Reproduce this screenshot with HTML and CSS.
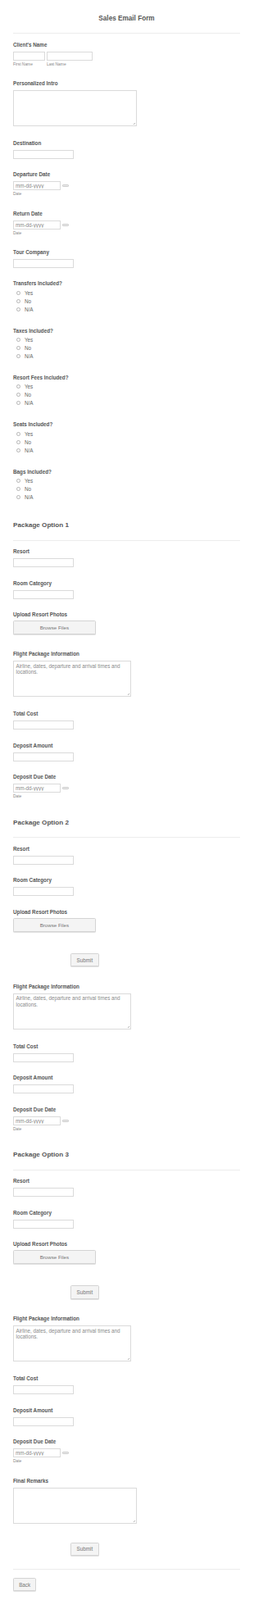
FILE: index.html
```html
<!DOCTYPE html>
<html lang="en">
<head>
    <meta charset="UTF-8">
    <meta name="viewport" content="width=device-width, initial-scale=1.0">
    <title>Sales Email Form</title>
    <link rel="stylesheet" href="styles.css">
</head>
<body>

<form class="sales-form">

    <div class="form-header">
        <h1 class="form-title">Sales Email Form</h1>
    </div>

    <div class="field field-sub">
        <label class="field-label">Client's Name</label>
        <div class="name-row">
            <div class="name-col first">
                <input class="text-input" type="text">
                <div class="sublabel">First Name</div>
            </div>
            <div class="name-col last">
                <input class="text-input" type="text">
                <div class="sublabel">Last Name</div>
            </div>
        </div>
    </div>

    <div class="field field-area">
        <label class="field-label">Personalized Intro</label>
        <textarea class="text-area wide"></textarea>
    </div>

    <div class="field">
        <label class="field-label">Destination</label>
        <input class="text-input" type="text">
    </div>

    <div class="field field-sub">
        <label class="field-label">Departure Date</label>
        <div class="date-row">
            <input class="date-input" type="text" placeholder="mm-dd-yyyy">
            <svg class="cal-icon" viewBox="0 0 8 3"><rect x="0.4" y="0.4" width="7.2" height="2.2" rx="1.1" fill="#ececec" stroke="#a9a9a9" stroke-width="0.6"/></svg>
        </div>
        <div class="sublabel">Date</div>
    </div>

    <div class="field field-sub">
        <label class="field-label">Return Date</label>
        <div class="date-row">
            <input class="date-input" type="text" placeholder="mm-dd-yyyy">
            <svg class="cal-icon" viewBox="0 0 8 3"><rect x="0.4" y="0.4" width="7.2" height="2.2" rx="1.1" fill="#ececec" stroke="#a9a9a9" stroke-width="0.6"/></svg>
        </div>
        <div class="sublabel">Date</div>
    </div>

    <div class="field">
        <label class="field-label">Tour Company</label>
        <input class="text-input" type="text">
    </div>

    <div class="field field-radio">
        <label class="field-label">Transfers Included?</label>
        <label class="radio-row"><input type="radio" name="transfers"><span>Yes</span></label>
        <label class="radio-row"><input type="radio" name="transfers"><span>No</span></label>
        <label class="radio-row"><input type="radio" name="transfers"><span>N/A</span></label>
    </div>

    <div class="field field-radio">
        <label class="field-label">Taxes Included?</label>
        <label class="radio-row"><input type="radio" name="taxes"><span>Yes</span></label>
        <label class="radio-row"><input type="radio" name="taxes"><span>No</span></label>
        <label class="radio-row"><input type="radio" name="taxes"><span>N/A</span></label>
    </div>

    <div class="field field-radio">
        <label class="field-label">Resort Fees Included?</label>
        <label class="radio-row"><input type="radio" name="fees"><span>Yes</span></label>
        <label class="radio-row"><input type="radio" name="fees"><span>No</span></label>
        <label class="radio-row"><input type="radio" name="fees"><span>N/A</span></label>
    </div>

    <div class="field field-radio">
        <label class="field-label">Seats Included?</label>
        <label class="radio-row"><input type="radio" name="seats"><span>Yes</span></label>
        <label class="radio-row"><input type="radio" name="seats"><span>No</span></label>
        <label class="radio-row"><input type="radio" name="seats"><span>N/A</span></label>
    </div>

    <div class="field field-radio">
        <label class="field-label">Bags Included?</label>
        <label class="radio-row"><input type="radio" name="bags"><span>Yes</span></label>
        <label class="radio-row"><input type="radio" name="bags"><span>No</span></label>
        <label class="radio-row"><input type="radio" name="bags"><span>N/A</span></label>
    </div>

    <!-- Package Option 1 -->
    <div class="section-header">
        <h2 class="section-title">Package Option 1</h2>
    </div>

    <div class="field">
        <label class="field-label">Resort</label>
        <input class="text-input" type="text">
    </div>

    <div class="field">
        <label class="field-label">Room Category</label>
        <input class="text-input" type="text">
    </div>

    <div class="field field-upload">
        <label class="field-label">Upload Resort Photos</label>
        <button class="browse-btn" type="button">Browse Files</button>
    </div>

    <div class="field field-area">
        <label class="field-label">Flight Package Information</label>
        <textarea class="text-area" placeholder="Airline, dates, departure and arrival times and locations."></textarea>
    </div>

    <div class="field">
        <label class="field-label">Total Cost</label>
        <input class="text-input" type="text">
    </div>

    <div class="field">
        <label class="field-label">Deposit Amount</label>
        <input class="text-input" type="text">
    </div>

    <div class="field field-sub">
        <label class="field-label">Deposit Due Date</label>
        <div class="date-row">
            <input class="date-input" type="text" placeholder="mm-dd-yyyy">
            <svg class="cal-icon" viewBox="0 0 8 3"><rect x="0.4" y="0.4" width="7.2" height="2.2" rx="1.1" fill="#ececec" stroke="#a9a9a9" stroke-width="0.6"/></svg>
        </div>
        <div class="sublabel">Date</div>
    </div>

    <!-- Package Option 2 -->
    <div class="section-header">
        <h2 class="section-title">Package Option 2</h2>
    </div>

    <div class="field">
        <label class="field-label">Resort</label>
        <input class="text-input" type="text">
    </div>

    <div class="field">
        <label class="field-label">Room Category</label>
        <input class="text-input" type="text">
    </div>

    <div class="field field-upload">
        <label class="field-label">Upload Resort Photos</label>
        <button class="browse-btn" type="button">Browse Files</button>
    </div>

    <div class="submit-row">
        <button class="submit-btn" type="submit">Submit</button>
    </div>

    <div class="field field-area">
        <label class="field-label">Flight Package Information</label>
        <textarea class="text-area" placeholder="Airline, dates, departure and arrival times and locations."></textarea>
    </div>

    <div class="field">
        <label class="field-label">Total Cost</label>
        <input class="text-input" type="text">
    </div>

    <div class="field">
        <label class="field-label">Deposit Amount</label>
        <input class="text-input" type="text">
    </div>

    <div class="field field-sub">
        <label class="field-label">Deposit Due Date</label>
        <div class="date-row">
            <input class="date-input" type="text" placeholder="mm-dd-yyyy">
            <svg class="cal-icon" viewBox="0 0 8 3"><rect x="0.4" y="0.4" width="7.2" height="2.2" rx="1.1" fill="#ececec" stroke="#a9a9a9" stroke-width="0.6"/></svg>
        </div>
        <div class="sublabel">Date</div>
    </div>

    <!-- Package Option 3 -->
    <div class="section-header">
        <h2 class="section-title">Package Option 3</h2>
    </div>

    <div class="field">
        <label class="field-label">Resort</label>
        <input class="text-input" type="text">
    </div>

    <div class="field">
        <label class="field-label">Room Category</label>
        <input class="text-input" type="text">
    </div>

    <div class="field field-upload">
        <label class="field-label">Upload Resort Photos</label>
        <button class="browse-btn" type="button">Browse Files</button>
    </div>

    <div class="submit-row">
        <button class="submit-btn" type="submit">Submit</button>
    </div>

    <div class="field field-area">
        <label class="field-label">Flight Package Information</label>
        <textarea class="text-area" placeholder="Airline, dates, departure and arrival times and locations."></textarea>
    </div>

    <div class="field">
        <label class="field-label">Total Cost</label>
        <input class="text-input" type="text">
    </div>

    <div class="field">
        <label class="field-label">Deposit Amount</label>
        <input class="text-input" type="text">
    </div>

    <div class="field field-sub">
        <label class="field-label">Deposit Due Date</label>
        <div class="date-row">
            <input class="date-input" type="text" placeholder="mm-dd-yyyy">
            <svg class="cal-icon" viewBox="0 0 8 3"><rect x="0.4" y="0.4" width="7.2" height="2.2" rx="1.1" fill="#ececec" stroke="#a9a9a9" stroke-width="0.6"/></svg>
        </div>
        <div class="sublabel">Date</div>
    </div>

    <div class="field field-area">
        <label class="field-label">Final Remarks</label>
        <textarea class="text-area wide"></textarea>
    </div>

    <div class="submit-row last">
        <button class="submit-btn" type="submit">Submit</button>
    </div>

    <div class="form-footer">
        <button class="back-btn" type="button">Back</button>
    </div>

</form>

</body>
</html>
```

FILE: styles.css
```css
html, body {
    margin: 0;
    padding: 0;
    background: #fff;
    font-family: "Liberation Sans", Arial, sans-serif;
    color: #555;
}

.sales-form {
    width: 277px;
    padding: 0 17px 0 16px;
}

/* Title + section headings */
.form-header {
    padding: 17.7px 0 12.6px;
    border-bottom: 1px solid #ececec;
    margin-bottom: 9.5px;
}

.form-title {
    margin: 0;
    font-size: 8.2px;
    line-height: 10px;
    font-weight: bold;
    text-align: center;
    color: #555;
}

.section-header {
    padding: 7.3px 0 12.6px;
    border-bottom: 1px solid #ececec;
    margin-bottom: 9.5px;
}

.section-title {
    margin: 0;
    font-size: 8.1px;
    line-height: 10px;
    font-weight: bold;
    color: #555;
}

/* Fields */
.field {
    padding-bottom: 15.4px;
}

.field-sub {
    padding-bottom: 15.3px;
}

.field-area {
    padding-bottom: 17px;
}

.field-radio {
    padding-bottom: 17.5px;
}

.field-upload {
    padding-bottom: 20.4px;
}

.field-label {
    display: block;
    font-size: 6.3px;
    line-height: 8px;
    font-weight: bold;
    color: #555;
    margin-bottom: 4px;
}

.field-radio .field-label {
    margin-bottom: 1.8px;
}

.field-upload .field-label {
    margin-bottom: 3.3px;
}

.text-input,
.date-input {
    display: block;
    box-sizing: border-box;
    height: 11px;
    margin: 0;
    padding: 0 2px;
    border: 1px solid #dadada;
    border-radius: 0;
    background: #fff;
    font-family: inherit;
    font-size: 6.3px;
    color: #555;
    outline: none;
}

.text-input {
    width: 73.7px;
}

.date-input {
    width: 57.7px;
}

.date-input::placeholder {
    color: #8a8a8a;
}

.date-row {
    display: flex;
    align-items: center;
}

.cal-icon {
    width: 8px;
    height: 3px;
    margin-left: 2.3px;
}

.sublabel {
    margin-top: 1px;
    font-size: 4.9px;
    line-height: 8px;
    color: #888;
}

.name-row {
    display: flex;
    gap: 2.3px;
}

.name-col.first .text-input {
    width: 38.7px;
}

.name-col.last .text-input {
    width: 56.3px;
}

.text-area {
    display: block;
    box-sizing: border-box;
    width: 144px;
    height: 44px;
    margin: 0;
    padding: 1.5px 2.5px;
    border: 1px solid #dadada;
    border-radius: 0;
    resize: none;
    font-family: inherit;
    font-size: 6.3px;
    line-height: 7.2px;
    color: #555;
    outline: none;
    /* tiny resize grip */
    background: #fff linear-gradient(135deg, transparent 0 52%, #b5b5b5 52% 60%, transparent 60% 74%, #b5b5b5 74% 82%, transparent 82%) no-repeat right 1px bottom 1px / 4px 4px;
}

.text-area.wide {
    width: 150.7px;
}

.text-area::placeholder {
    color: #8a8a8a;
}

/* Radios */
.radio-row {
    display: flex;
    align-items: center;
    height: 10px;
    font-size: 6.3px;
    color: #666;
}

.radio-row input {
    appearance: none;
    -webkit-appearance: none;
    box-sizing: border-box;
    width: 5px;
    height: 5px;
    margin: 0 5.5px 0 3.5px;
    border: 0.8px solid #b3b3b3;
    border-radius: 50%;
    background: #fff;
}

/* Buttons */
.browse-btn,
.submit-btn,
.back-btn {
    display: block;
    box-sizing: border-box;
    margin: 0;
    padding: 0;
    border: 1px solid #d4d4d4;
    border-radius: 1.5px;
    background: #f4f4f4;
    box-shadow: 0 0.7px 0 #d9d9d9;
    font-family: inherit;
    font-size: 6.2px;
    font-weight: normal;
    color: #777;
    text-align: center;
}

.browse-btn {
    width: 100.7px;
    height: 16.6px;
}

.submit-row {
    padding: 6px 0 20.6px 70px;
}

.submit-row.last {
    padding-bottom: 16.2px;
}

.submit-btn {
    width: 34.7px;
    height: 16.4px;
    font-size: 6.3px;
}

.form-footer {
    border-top: 1px solid #ececec;
    padding: 9.6px 0 11px;
}

.back-btn {
    width: 28.3px;
    height: 16.7px;
    font-size: 6.3px;
}
```
